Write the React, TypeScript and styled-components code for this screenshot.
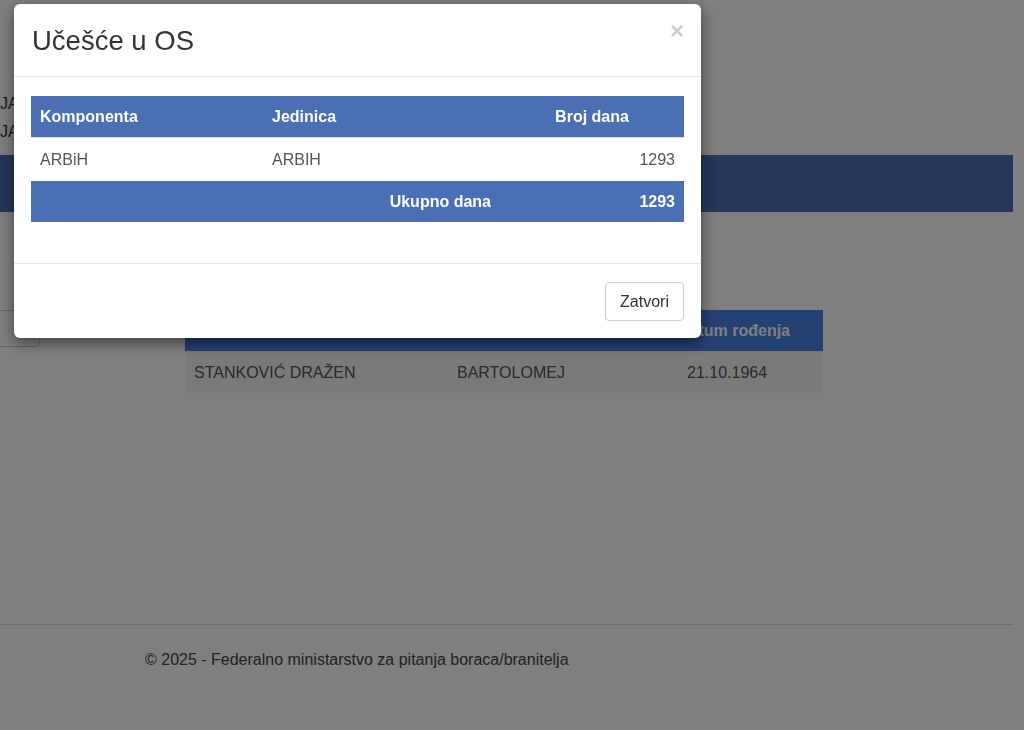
import React from 'react';
import styled, { createGlobalStyle } from 'styled-components';

const GlobalStyle = createGlobalStyle`
  html, body {
    margin: 0;
    padding: 0;
    background: #fff;
    font-family: "Liberation Sans", Arial, Helvetica, sans-serif;
    font-size: 16px;
    color: #333;
    overflow: hidden;
  }
`;

const Page = styled.div`
  width: 1013px;
  height: 730px;
  padding-top: 90px;
  box-sizing: border-box;
  display: flex;
  flex-direction: column;
`;

const NameLines = styled.div`
  display: flex;
  flex-direction: column;
  line-height: 28px;
  color: #333;
`;

const Banner = styled.div`
  margin-top: 9px;
  height: 57px;
  background: #4a6eb4;
`;

const ContentRow = styled.div`
  margin-top: 98px;
  display: grid;
  grid-template-columns: 185px 638px;
  align-items: start;
`;

const SearchInput = styled.div`
  margin-left: -30px;
  width: 70px;
  height: 37px;
  border: 1px solid #ccc;
  border-radius: 4px;
  background: #fff;
  box-sizing: border-box;
`;

const ResultTable = styled.table`
  width: 638px;
  border-collapse: collapse;
  table-layout: fixed;

  th {
    height: 41px;
    padding: 0 9px;
    background: #4a80e6;
    color: #fff;
    font-weight: bold;
    text-align: left;
  }

  th:last-child {
    padding-left: 0;
  }

  td {
    height: 40px;
    padding: 2px 9px 0 9px;
    background: #f4f4f4;
    color: #555;
  }
`;

const Footer = styled.footer`
  margin-top: 231px;
  border-top: 1px solid #ddd;
  padding: 26px 0 0 145px;
  color: #444;
  font-size: 16px;
`;

const Backdrop = styled.div`
  position: fixed;
  inset: 0;
  background: rgba(0, 0, 0, 0.5);
`;

const Dialog = styled.div`
  margin: 4px 0 0 14px;
  width: 687px;
  background: #fff;
  border-radius: 6px;
  box-shadow: 0 5px 15px rgba(0, 0, 0, 0.5);
  display: flex;
  flex-direction: column;
`;

const DialogHeader = styled.div`
  padding: 17px 17px 16px 18px;
  border-bottom: 1px solid #e5e5e5;
  display: flex;
  justify-content: space-between;
  align-items: flex-start;
`;

const Title = styled.h4`
  margin: 0;
  font-size: 27.5px;
  font-weight: 500;
  line-height: 39px;
  color: #333;
`;

const CloseButton = styled.button`
  margin: -2px 0 0 0;
  padding: 0;
  border: 0;
  background: transparent;
  font-family: "Liberation Sans", Arial, sans-serif;
  font-size: 24px;
  font-weight: bold;
  line-height: 1;
  color: #000;
  opacity: 0.2;
  cursor: pointer;
`;

const DialogBody = styled.div`
  padding: 19px 17px 17px 17px;
`;

const DaysTable = styled.table`
  width: 100%;
  margin-bottom: 24px;
  border-collapse: collapse;
  table-layout: fixed;
`;

const HeadCell = styled.th<{ $align?: string }>`
  height: 40px;
  padding: 1px 9px 0 9px;
  background: #4a6fb5;
  color: #fff;
  font-weight: bold;
  text-align: ${p => p.$align || 'left'};
`;

const Cell = styled.td<{ $align?: string }>`
  height: 42px;
  padding: 1px 9px 0 9px;
  color: #555;
  text-align: ${p => p.$align || 'left'};
  border-top: 1px solid #ddd;
`;

const TotalCell = styled.td<{ $align?: string }>`
  height: 40px;
  padding: 1px 9px 0 9px;
  background: #4a6fb5;
  color: #fff;
  font-weight: bold;
  text-align: ${p => p.$align || 'right'};
`;

const DialogFooter = styled.div`
  padding: 18px 17px 17px 17px;
  border-top: 1px solid #e5e5e5;
  display: flex;
  justify-content: flex-end;
`;

const Button = styled.button`
  height: 39px;
  padding: 0 14px;
  border: 1px solid #ccc;
  border-radius: 4px;
  background: #fff;
  color: #333;
  font-family: "Liberation Sans", Arial, sans-serif;
  font-size: 16px;
  cursor: pointer;
`;

export default function App() {
  return (
    <>
      <GlobalStyle />
      <Page>
        <NameLines>
          <span>JA</span>
          <span>JA</span>
        </NameLines>
        <Banner />
        <ContentRow>
          <SearchInput />
          <ResultTable>
            <colgroup>
              <col style={{ width: 263 }} />
              <col style={{ width: 230 }} />
              <col style={{ width: 145 }} />
            </colgroup>
            <thead>
              <tr>
                <th>Prezime i ime</th>
                <th>Ime oca</th>
                <th>Datum rođenja</th>
              </tr>
            </thead>
            <tbody>
              <tr>
                <td>STANKOVIĆ DRAŽEN</td>
                <td>BARTOLOMEJ</td>
                <td>21.10.1964</td>
              </tr>
            </tbody>
          </ResultTable>
        </ContentRow>
        <Footer>© 2025 - Federalno ministarstvo za pitanja boraca/branitelja</Footer>
      </Page>

      <Backdrop>
        <Dialog>
          <DialogHeader>
            <Title>Učešće u OS</Title>
            <CloseButton aria-label="Close">×</CloseButton>
          </DialogHeader>
          <DialogBody>
            <DaysTable>
              <colgroup>
                <col style={{ width: 232 }} />
                <col style={{ width: 237 }} />
                <col style={{ width: 184 }} />
              </colgroup>
              <thead>
                <tr>
                  <HeadCell>Komponenta</HeadCell>
                  <HeadCell>Jedinica</HeadCell>
                  <HeadCell $align="center">Broj dana</HeadCell>
                </tr>
              </thead>
              <tbody>
                <tr>
                  <Cell>ARBiH</Cell>
                  <Cell>ARBIH</Cell>
                  <Cell $align="right">1293</Cell>
                </tr>
              </tbody>
              <tfoot>
                <tr>
                  <TotalCell colSpan={2}>Ukupno dana</TotalCell>
                  <TotalCell>1293</TotalCell>
                </tr>
              </tfoot>
            </DaysTable>
          </DialogBody>
          <DialogFooter>
            <Button>Zatvori</Button>
          </DialogFooter>
        </Dialog>
      </Backdrop>
    </>
  );
}
